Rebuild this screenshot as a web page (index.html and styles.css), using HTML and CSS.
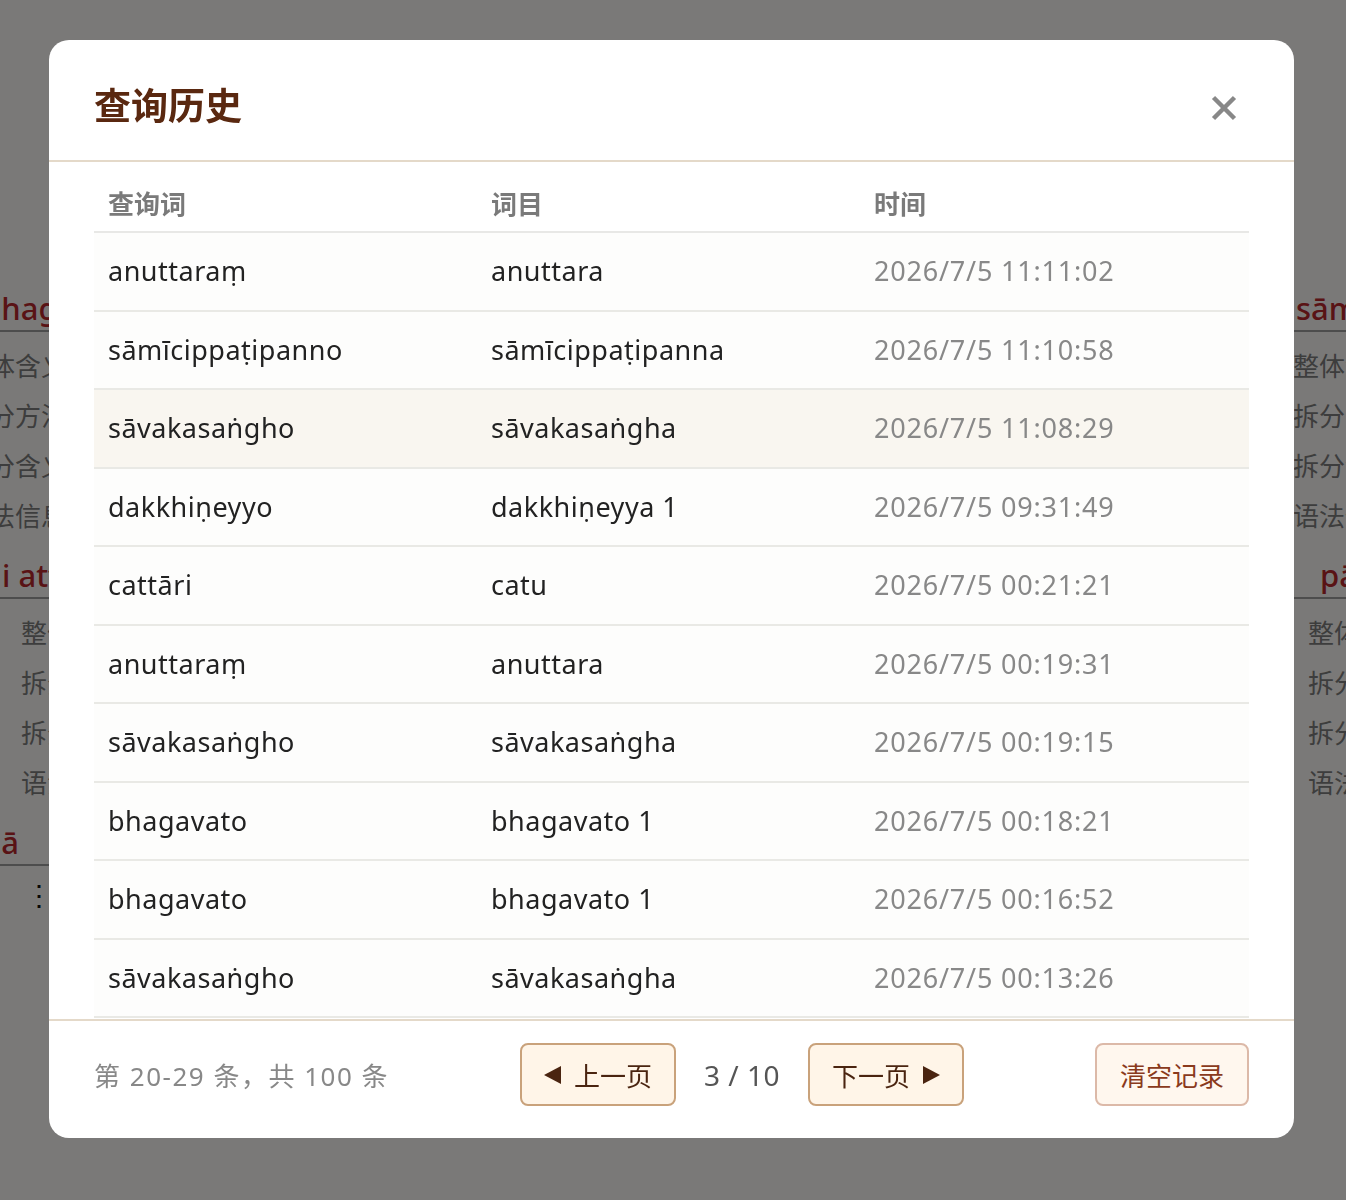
FILE: index.html
```html
<!DOCTYPE html>
<html lang="zh-CN">
<head>
<meta charset="UTF-8">
<meta name="viewport" content="width=device-width, initial-scale=1.0">
<title>查询历史</title>
<link rel="stylesheet" href="styles.css">
</head>
<body>
<div class="page">
    <div class="col col-left">
        <div class="entry">
            <h3 class="entry-head">bhagavato</h3>
            <div class="entry-line">整体含义</div>
            <div class="entry-line">拆分方法</div>
            <div class="entry-line">拆分含义</div>
            <div class="entry-line">语法信息</div>
        </div>
        <div class="entry entry-sub">
            <h3 class="entry-head">i atthā</h3>
            <div class="entry-line">整体含义</div>
            <div class="entry-line">拆分方法</div>
            <div class="entry-line">拆分含义</div>
            <div class="entry-line">语法信息</div>
        </div>
        <div class="entry">
            <h3 class="entry-head">gā</h3>
            <div class="more">⋮</div>
        </div>
    </div>
    <div class="col col-right">
        <div class="entry">
            <h3 class="entry-head">sāmīcippaṭipanno</h3>
            <div class="entry-line">整体含义</div>
            <div class="entry-line">拆分方法</div>
            <div class="entry-line">拆分含义</div>
            <div class="entry-line">语法信息</div>
        </div>
        <div class="entry entry-sub">
            <h3 class="entry-head">pāḷi</h3>
            <div class="entry-line">整体含义</div>
            <div class="entry-line">拆分方法</div>
            <div class="entry-line">拆分含义</div>
            <div class="entry-line">语法信息</div>
        </div>
    </div>
</div>

<div class="overlay">
    <div class="modal">
        <div class="modal-header">
            <h2 class="modal-title">查询历史</h2>
            <button class="close-btn" aria-label="关闭">
                <svg width="26" height="26" viewBox="0 0 26 26"><path d="M2.5 2.5 L23.5 23.5 M23.5 2.5 L2.5 23.5" stroke="#888" stroke-width="4.5" fill="none"/></svg>
            </button>
        </div>
        <div class="modal-body">
            <table class="history">
                <colgroup>
                    <col class="col-word">
                    <col class="col-word">
                    <col>
                </colgroup>
                <thead>
                    <tr><th>查询词</th><th>词目</th><th>时间</th></tr>
                </thead>
                <tbody id="historyRows"></tbody>
            </table>
        </div>
        <div class="modal-footer">
            <div class="page-info">第 20-29 条，共 100 条</div>
            <div class="pager">
                <button class="page-btn">
                    <svg width="17" height="18" viewBox="0 0 17 18"><polygon points="17,0 17,18 0,9" fill="#4a2410"/></svg>
                    上一页
                </button>
                <span class="page-num">3 / 10</span>
                <button class="page-btn">
                    下一页
                    <svg width="17" height="18" viewBox="0 0 17 18"><polygon points="0,0 0,18 17,9" fill="#4a2410"/></svg>
                </button>
            </div>
            <button class="clear-btn">清空记录</button>
        </div>
    </div>
</div>

<script>
    const history = [
        ['anuttaraṃ', 'anuttara', '2026/7/5 11:11:02'],
        ['sāmīcippaṭipanno', 'sāmīcippaṭipanna', '2026/7/5 11:10:58'],
        ['sāvakasaṅgho', 'sāvakasaṅgha', '2026/7/5 11:08:29'],
        ['dakkhiṇeyyo', 'dakkhiṇeyya 1', '2026/7/5 09:31:49'],
        ['cattāri', 'catu', '2026/7/5 00:21:21'],
        ['anuttaraṃ', 'anuttara', '2026/7/5 00:19:31'],
        ['sāvakasaṅgho', 'sāvakasaṅgha', '2026/7/5 00:19:15'],
        ['bhagavato', 'bhagavato 1', '2026/7/5 00:18:21'],
        ['bhagavato', 'bhagavato 1', '2026/7/5 00:16:52'],
        ['sāvakasaṅgho', 'sāvakasaṅgha', '2026/7/5 00:13:26']
    ];

    const rows = document.getElementById('historyRows');
    history.forEach((item, index) => {
        const tr = document.createElement('tr');
        if (index === 2) tr.classList.add('hovered');
        tr.innerHTML = `<td>${item[0]}</td><td>${item[1]}</td><td class="time">${item[2]}</td>`;
        rows.appendChild(tr);
    });
</script>
</body>
</html>
```

FILE: styles.css
```css
body {
    margin: 0;
    overflow: hidden;
    background-color: #f5f3f1;
    font-family: 'Noto Sans', 'Noto Sans CJK SC', sans-serif;
}

button {
    font-family: inherit;
}

/* page behind the dialog */
.page {
    display: flex;
    margin-left: -37px;
    padding-top: 286px;
}

.col-left {
    flex: 0 0 1327px;
}

.col-right {
    flex: 0 0 400px;
}

.entry-head {
    margin: 0;
    padding-left: 19px;
    font-size: 31px;
    line-height: 44px;
    font-weight: 500;
    color: #b3262b;
    border-bottom: 2px solid #9a9a9a;
    white-space: nowrap;
}

.col-right .entry-head {
    padding-left: 6px;
}

.col-left .entry-sub .entry-head {
    padding-left: 39px;
}

.col-right .entry-sub .entry-head {
    padding-left: 30px;
}

.entry {
    padding-bottom: 10px;
}

.entry-head + .entry-line {
    margin-top: 9px;
}

.entry + .entry {
    margin-top: 2px;
}

.entry-line {
    font-size: 26px;
    line-height: 50px;
    color: #7a7a7a;
    white-space: nowrap;
}

.col-right .entry-line {
    padding-left: 3px;
}

.col-left .entry-sub .entry-line {
    padding-left: 58px;
}

.col-right .entry-sub .entry-line {
    padding-left: 18px;
}

.more {
    margin-top: 8px;
    padding-left: 62px;
    font-size: 28px;
    line-height: 40px;
    color: #111;
}

/* dialog */
.overlay {
    position: fixed;
    inset: 0;
    background-color: rgba(0, 0, 0, 0.5);
}

.modal {
    display: flex;
    flex-direction: column;
    width: 1245px;
    height: 1098px;
    margin: 40px 0 0 49px;
    background-color: #fff;
    border-radius: 20px;
    overflow: hidden;
}

.modal-header {
    display: flex;
    align-items: center;
    justify-content: space-between;
    height: 50px;
    padding: 41px 45px 29px;
    border-bottom: 2px solid #e4d9c9;
}

.modal-title {
    margin: 0;
    font-size: 37px;
    line-height: 50px;
    font-weight: 700;
    color: #5a2810;
}

.close-btn {
    display: flex;
    align-items: center;
    justify-content: center;
    width: 50px;
    height: 50px;
    padding: 4px 0 0;
    border: none;
    background: none;
    cursor: pointer;
}

.modal-body {
    flex: 1;
    min-height: 0;
    overflow: hidden;
    padding: 0 45px;
}

.history {
    width: 100%;
    table-layout: fixed;
    border-collapse: separate;
    border-spacing: 0;
}

.history .col-word {
    width: 383px;
}

.history th {
    padding: 24px 14px 9px;
    line-height: 36px;
    text-align: left;
    font-size: 26px;
    font-weight: 600;
    color: #7a7a7a;
    border-bottom: 2px solid #e8e8e6;
}

.history td {
    padding: 20px 14px;
    line-height: 36.5px;
    font-size: 27px;
    letter-spacing: 0.5px;
    color: #222;
    background-color: #fdfdfc;
    border-bottom: 2px solid #e9e9e5;
    white-space: nowrap;
}

.history tr.hovered td {
    background-color: #f9f6f0;
}

.history td.time {
    letter-spacing: 0.8px;
    color: #888;
}

.modal-footer {
    display: flex;
    align-items: center;
    justify-content: space-between;
    padding: 22px 45px 32px;
    border-top: 2px solid #e4d9c9;
}

.page-info {
    font-size: 26px;
    letter-spacing: 1.5px;
    color: #888;
}

.pager {
    display: flex;
    align-items: center;
    gap: 28px;
}

.page-btn,
.clear-btn {
    display: flex;
    align-items: center;
    gap: 13px;
    height: 63px;
    padding: 0 22px;
    border: 2px solid #c9a27b;
    border-radius: 8px;
    background-color: #fff5e8;
    font-size: 26px;
    color: #4a2410;
    cursor: pointer;
}

.page-num {
    font-size: 28px;
    letter-spacing: 0.5px;
    color: #555;
}

.clear-btn {
    padding: 0 23px;
    border-color: #dcb9a8;
    background-color: #fff7ee;
    color: #8a3a1c;
}
```
